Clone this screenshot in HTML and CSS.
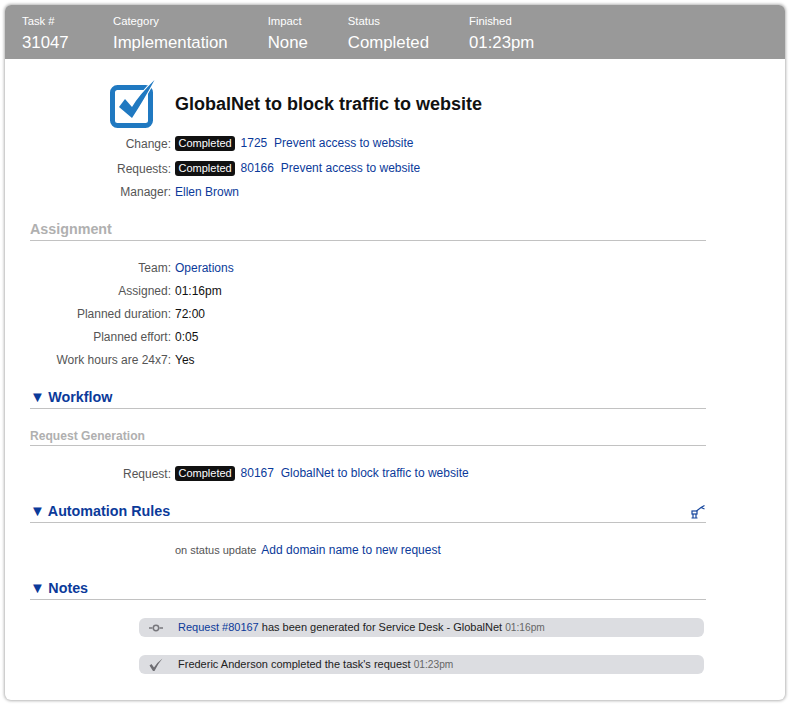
FILE: index.html
```html
<!DOCTYPE html>
<html lang="en">
<head>
<meta charset="utf-8">
<title>Task 31047</title>
<link rel="stylesheet" href="styles.css">
</head>
<body>
<div class="card">
  <header class="top">
    <div class="top-col first"><div class="top-label">Task #</div><div class="top-value">31047</div></div>
    <div class="top-col"><div class="top-label">Category</div><div class="top-value">Implementation</div></div>
    <div class="top-col"><div class="top-label">Impact</div><div class="top-value">None</div></div>
    <div class="top-col"><div class="top-label">Status</div><div class="top-value">Completed</div></div>
    <div class="top-col"><div class="top-label">Finished</div><div class="top-value">01:23pm</div></div>
  </header>
  <main class="main">
    <div class="title-row">
      <div class="title-icon">
        <svg width="46" height="48" viewBox="0 0 46 48"><rect x="2.500" y="7.500" width="38" height="38" rx="5" fill="none" stroke="#2079c1" stroke-width="5"/><path d="M9 27 L15 19 L22 27 Q29 15 44.500 0 Q35 18 22 38 Z" fill="#2079c1" stroke="#fff" stroke-width="2" paint-order="stroke"/></svg>
      </div>
      <h1 class="title">GlobalNet to block traffic to website</h1>
    </div>
    <div class="rows head-rows">
      <div class="row h25"><span class="lbl">Change:</span><span class="val"><span class="badge">Completed</span> <a class="lnk">1725</a> <a class="lnk gap">Prevent access to website</a></span></div>
      <div class="row h25"><span class="lbl">Requests:</span><span class="val"><span class="badge">Completed</span> <a class="lnk">80166</a> <a class="lnk gap">Prevent access to website</a></span></div>
      <div class="row h22"><span class="lbl">Manager:</span><span class="val"><a class="lnk">Ellen Brown</a></span></div>
    </div>
    <h2 class="sec plain sec-assign">Assignment</h2>
    <div class="rows assign-rows">
      <div class="row h23"><span class="lbl">Team:</span><span class="val"><a class="lnk">Operations</a></span></div>
      <div class="row h23"><span class="lbl">Assigned:</span><span class="val">01:16pm</span></div>
      <div class="row h23"><span class="lbl">Planned duration:</span><span class="val">72:00</span></div>
      <div class="row h23"><span class="lbl">Planned effort:</span><span class="val">0:05</span></div>
      <div class="row h23"><span class="lbl">Work hours are 24x7:</span><span class="val">Yes</span></div>
    </div>
    <h2 class="sec sec-flow"><span class="tri">▼</span> Workflow</h2>
    <h3 class="sub">Request Generation</h3>
    <div class="rows req-rows">
      <div class="row h23"><span class="lbl">Request:</span><span class="val"><span class="badge">Completed</span> <a class="lnk">80167</a> <a class="lnk gap">GlobalNet to block traffic to website</a></span></div>
    </div>
    <h2 class="sec sec-auto"><span class="tri">▼</span> Automation Rules<svg class="robot" width="16" height="15" viewBox="0 0 16 15"><g fill="none" stroke="#17479e" stroke-width="1.200"><rect x="2" y="7" width="5" height="3"/><path d="M1.500 14h6M3 10v4M6 10v4M6.500 7l4.500-3.500 3.500-2M11 3.500l3.500 1.500"/></g></svg></h2>
    <div class="rule-row"><span class="on">on status update</span><a class="lnk big">Add domain name to new request</a></div>
    <h2 class="sec sec-notes"><span class="tri">▼</span> Notes</h2>
    <div class="notes">
      <div class="note">
        <svg class="note-icon" width="14" height="8" viewBox="0 0 14 8"><path d="M0 4h3.500M10.500 4H14" stroke="#77777c" stroke-width="1.400"/><circle cx="7" cy="4" r="2.700" fill="none" stroke="#77777c" stroke-width="1.500"/></svg>
        <span class="note-text"><a class="lnk">Request #80167</a> has been generated for Service Desk - GlobalNet <span class="time">01:16pm</span></span>
      </div>
      <div class="note">
        <svg class="note-icon" width="14" height="13" viewBox="0 0 14 13"><path d="M0.500 7 L2.500 5.500 L5 9 Q8 4 13.500 0 Q9 5 5.500 12.500 H4 Z" fill="#6e6e73"/></svg>
        <span class="note-text">Frederic Anderson completed the task's request <span class="time">01:23pm</span></span>
      </div>
    </div>
  </main>
</div>
</body>
</html>
```

FILE: styles.css
```css
* { box-sizing: border-box; }
html, body { margin: 0; padding: 0; }
body {
  background: #fff;
  font-family: "Liberation Sans", Arial, sans-serif;
  font-size: 12px;
  color: #111;
  padding: 5px;
}
.card {
  width: 780px;
  height: 695px;
  background: #fff;
  border-radius: 6px;
  box-shadow: 0 0 3px 1px #b5b5b5;
  overflow: hidden;
}
.top {
  height: 54px;
  background: #999;
  color: #fff;
  display: flex;
  gap: 40px;
  padding: 9px 0 0 17px;
}
.top-col.first { margin-right: 4.300px; }
.top-label { font-size: 11.300px; line-height: 14px; }
.top-value { font-size: 16.800px; line-height: 20px; margin-top: 5px; }
.main { padding: 0 79px 0 25px; }
.title-row {
  display: flex;
  align-items: center;
  height: 48px;
  margin-top: 21px;
  padding-left: 80px;
}
.title-icon { width: 65px; height: 48px; }
.title-icon svg { display: block; }
.title { margin: 0; font-size: 18px; font-weight: bold; color: #111; }
.rows { display: flex; flex-direction: column; }
.row { display: flex; align-items: center; }
.h25 { height: 25px; }
.h23 { height: 23px; }
.h22 { height: 22px; }
.lbl { width: 141px; text-align: right; color: #555; margin-right: 4px; flex: none; }
.val { color: #111; }
.lnk { color: #0b3a9a; }
.gap { margin-left: 3.500px; }
.badge {
  display: inline-block;
  background: #111;
  color: #fff;
  font-size: 11px;
  line-height: 15px;
  padding: 0 3.500px;
  border-radius: 3px;
  margin-right: 2px;
}
.head-rows { margin-top: 3px; }
.sec {
  margin: 0;
  font-size: 14.300px;
  font-weight: bold;
  line-height: 20px;
  padding-bottom: 1px;
  border-bottom: 1px solid #c2c2c2;
  color: #0b3a9a;
  position: relative;
}
.sec.plain { color: #b0b0b0; }
.sec-assign { margin-top: 16px; }
.assign-rows { margin-top: 15px; }
.sec-flow { margin-top: 16px; }
.sec-auto { margin-top: 16px; }
.sec-notes { margin-top: 19px; }
.tri { font-size: 15px; margin-right: -0.500px; }
.sub {
  margin: 20px 0 0;
  font-size: 12.100px;
  font-weight: bold;
  line-height: 15px;
  color: #b0b0b0;
  border-bottom: 1px solid #c2c2c2;
  padding-bottom: 1px;
}
.req-rows { margin-top: 16px; }
.robot { position: absolute; right: 0; top: 3px; }
.rule-row {
  display: flex;
  align-items: center;
  height: 18px;
  margin-top: 18px;
  padding-left: 145px;
}
.on { font-size: 11px; color: #555; margin-right: 5px; }
.big { font-size: 12px; }
.notes { display: flex; flex-direction: column; gap: 18px; margin: 18px 0 0 109px; width: 565px; }
.note {
  height: 19px;
  background: #dcdde1;
  border-radius: 6px;
  display: flex;
  align-items: center;
  font-size: 11px;
  position: relative;
  padding: 0 0 1px 39px;
}
.note-icon { position: absolute; left: 10px; top: 50%; transform: translateY(-50%); }
.note-text { color: #222; }
.time { color: #666; font-size: 10.200px; }
```
